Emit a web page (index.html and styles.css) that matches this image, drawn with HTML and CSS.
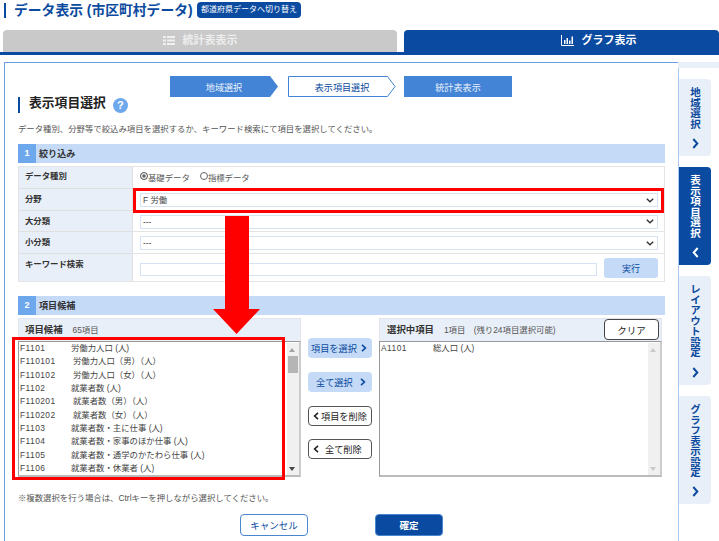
FILE: index.html
```html
<!DOCTYPE html>
<html lang="ja">
<head>
<meta charset="utf-8">
<title>データ表示</title>
<link rel="stylesheet" href="styles.css">
</head>
<body>
<div class="page">
  <header class="head">
    <h1 class="title">データ表示 (市区町村データ)</h1>
    <a class="switch">都道府県データへ切り替え</a>
  </header>
  <nav class="tabs">
    <div class="tab tab-off">
      <svg class="tab-ico" width="12" height="9" viewBox="0 0 12 9"><path fill="#f0f0f0" d="M0 0h3v2H0zM4 0h8v2H4zM0 3.500h3v2H0zM4 3.500h8v2H4zM0 7h3v2H0zM4 7h8v2H4z"/></svg>
      統計表表示
    </div>
    <div class="tab tab-on">
      <svg class="tab-ico" width="13" height="11" viewBox="0 0 13 11"><path fill="none" stroke="#fff" d="M.5 0v10.500H13"/><path fill="#fff" d="M3 5h1.500v4H3zM5.500 3h1.500v6H5.500zM8 5.500h1.500V9H8zM10.500 1.500H12V9h-1.500z"/></svg>
      グラフ表示
    </div>
  </nav>
  <div class="body">
    <main class="panel">
      <div class="steps">
        <div class="step">
          <svg class="step-bg" width="108" height="21" viewBox="0 0 108 21"><path fill="#4384d6" d="M0 0h100l8 10.500-8 10.500H0z"/></svg>
          <span class="step-t step-t-w">地域選択</span>
        </div>
        <div class="step">
          <svg class="step-bg" width="108" height="21" viewBox="0 0 108 21"><path fill="#fff" stroke="#4384d6" d="M.5.500h99l7.500 10-7.500 10H.5z"/></svg>
          <span class="step-t">表示項目選択</span>
        </div>
        <div class="step step-plain"><span class="step-t step-t-w">統計表表示</span></div>
      </div>
      <div class="heading">
        <h2 class="heading-t">表示項目選択</h2>
        <span class="help">?</span>
      </div>
      <p class="desc">データ種別、分野等で絞込み項目を選択するか、キーワード検索にて項目を選択してください。</p>

      <div class="sec"><span class="sec-n">1</span><span class="sec-t">絞り込み</span></div>
      <div class="form">
        <div class="lab r1">データ種別</div>
        <div class="val r1">
          <span class="radio"><i class="dot dot-on"></i>基礎データ</span>
          <span class="radio"><i class="dot"></i>指標データ</span>
        </div>
        <div class="lab r2">分野</div>
        <div class="val r2"><div class="sel"><span>F 労働</span><svg class="chev" width="8" height="5" viewBox="0 0 8 5"><path d="M.8.800 4 3.800 7.200.800" fill="none" stroke="#333" stroke-width="1.400"/></svg></div></div>
        <div class="lab r3">大分類</div>
        <div class="val r3"><div class="sel"><span>---</span><svg class="chev" width="8" height="5" viewBox="0 0 8 5"><path d="M.8.800 4 3.800 7.200.800" fill="none" stroke="#333" stroke-width="1.400"/></svg></div></div>
        <div class="lab r4">小分類</div>
        <div class="val r4"><div class="sel"><span>---</span><svg class="chev" width="8" height="5" viewBox="0 0 8 5"><path d="M.8.800 4 3.800 7.200.800" fill="none" stroke="#333" stroke-width="1.400"/></svg></div></div>
        <div class="lab r5">キーワード検索</div>
        <div class="val r5"><div class="kw"></div><button class="run">実行</button></div>
      </div>

      <div class="sec sec-2"><span class="sec-n">2</span><span class="sec-t">項目候補</span></div>
      <div class="pick">
        <section class="box">
          <div class="box-h"><b class="box-t">項目候補</b><span class="box-c">65項目</span></div>
          <div class="list">
            <ul class="items">
              <li><span class="code">F1101</span>労働力人口 (人)</li>
              <li><span class="code code-l">F110101</span>労働力人口（男）（人）</li>
              <li><span class="code code-l">F110102</span>労働力人口（女）（人）</li>
              <li><span class="code">F1102</span>就業者数 (人)</li>
              <li><span class="code code-l">F110201</span>就業者数（男）（人）</li>
              <li><span class="code code-l">F110202</span>就業者数（女）（人）</li>
              <li><span class="code">F1103</span>就業者数・主に仕事 (人)</li>
              <li><span class="code">F1104</span>就業者数・家事のほか仕事 (人)</li>
              <li><span class="code">F1105</span>就業者数・通学のかたわら仕事 (人)</li>
              <li><span class="code">F1106</span>就業者数・休業者 (人)</li>
            </ul>
            <div class="sb"><i class="up"></i><i class="thumb"></i><i class="down"></i></div>
          </div>
        </section>
        <div class="acts">
          <button class="act act-b">項目を選択<svg class="ac" width="6" height="8" viewBox="0 0 6 8"><path d="M1 .8 4.400 4 1 7.200" fill="none" stroke="#0b4a9e" stroke-width="1.600"/></svg></button>
          <button class="act act-b act-c">全て選択<svg class="ac" width="6" height="8" viewBox="0 0 6 8"><path d="M1 .8 4.400 4 1 7.200" fill="none" stroke="#0b4a9e" stroke-width="1.600"/></svg></button>
          <button class="act act-o"><svg class="ac2" width="6" height="8" viewBox="0 0 6 8"><path d="M5 .8 1.600 4 5 7.200" fill="none" stroke="#222" stroke-width="1.600"/></svg>項目を削除</button>
          <button class="act act-o act-d"><svg class="ac3" width="6" height="8" viewBox="0 0 6 8"><path d="M5 .8 1.600 4 5 7.200" fill="none" stroke="#222" stroke-width="1.600"/></svg>全て削除</button>
        </div>
        <section class="box box-r">
          <div class="box-h"><b class="box-t">選択中項目</b><span class="box-c">1項目　(残り24項目選択可能)</span><button class="clear">クリア</button></div>
          <div class="list">
            <ul class="items">
              <li><span class="code code-a">A1101</span>総人口 (人)</li>
            </ul>
            <div class="sb"><i class="up up-l"></i><i class="down down-l"></i></div>
          </div>
        </section>
      </div>
      <p class="note">※複数選択を行う場合は、Ctrlキーを押しながら選択してください。</p>
      <div class="foot">
        <button class="btn btn-c">キャンセル</button>
        <button class="btn btn-p">確定</button>
      </div>
    </main>
    <aside class="side">
      <a class="nav"><span class="nav-t">地域選択</span><svg width="7" height="11" viewBox="0 0 7 11"><path d="M1.300 1 5.300 5.500 1.300 10" fill="none" stroke="#0b4a9e" stroke-width="2"/></svg></a>
      <a class="nav nav-on"><span class="nav-t">表示項目選択</span><svg width="7" height="11" viewBox="0 0 7 11"><path d="M5.700 1 1.700 5.500 5.700 10" fill="none" stroke="#fff" stroke-width="2"/></svg></a>
      <a class="nav"><span class="nav-t">レイアウト設定</span><svg width="7" height="11" viewBox="0 0 7 11"><path d="M1.300 1 5.300 5.500 1.300 10" fill="none" stroke="#0b4a9e" stroke-width="2"/></svg></a>
      <a class="nav"><span class="nav-t">グラフ表示設定</span><svg width="7" height="11" viewBox="0 0 7 11"><path d="M1.300 1 5.300 5.500 1.300 10" fill="none" stroke="#0b4a9e" stroke-width="2"/></svg></a>
    </aside>
  </div>
  <div class="mark mark-1"></div>
  <div class="mark mark-2"></div>
  <svg class="arrow" width="47" height="118" viewBox="0 0 47 118"><path fill="#f00" d="M12 0h24v93h11L23.500 118 0 93h12z"/></svg>
</div>
</body>
</html>
```
FILE: styles.css
```css
* { box-sizing: border-box; }
html, body { margin: 0; padding: 0; background: #fff; }
body {
  font-family: "Liberation Sans", "Noto Sans CJK JP", sans-serif;
  font-size: 8.4px;
  color: #444;
}
.page { position: relative; width: 719px; height: 541px; overflow: hidden; }
button { font-family: inherit; padding: 0; cursor: pointer; }
ul { list-style: none; margin: 0; padding: 0; }

.head { height: 30px; padding: 2px 0 0 4px; display: flex; align-items: flex-start; }
.title {
  margin: 1px 4px 0 0; width: 189px; height: 15px; padding-left: 8px;
  border-left: 2px solid #0a4ba1;
  font-size: 13.8px; line-height: 15px; font-weight: 700; color: #0b4a9e; white-space: nowrap;
}
.switch {
  height: 16px; width: 104px; background: #0a4ba1; color: #fff; border-radius: 4px;
  font-size: 8px; line-height: 15px; text-align: center; white-space: nowrap;
}

.tabs { height: 25px; display: flex; padding-left: 3px; gap: 7px; border-bottom: 3px solid #0a4ba1; }
.tab {
  height: 22px; border-radius: 4px 4px 0 0; font-size: 11px; font-weight: 700;
  line-height: 20px; display: flex; justify-content: center; align-items: center; gap: 8px;
  padding-bottom: 2px;
}
.tab-off { width: 394px; background: #c9c9c9; color: #eee; }
.tab-on { width: 315px; background: #0a4ba1; color: #fff; padding-left: 74px; }
.tab-ico { flex: none; }

.body { display: flex; margin-top: 7px; height: 479px; }
.panel {
  width: 675px; margin-left: 4px; padding: 13px 0 0 13px;
  border: 1px solid #6a9ee0; border-bottom: 0; position: relative;
  border-right-color: #a9c9f2;
}
.steps { height: 21px; display: flex; margin-left: 152px; gap: 10px; }
.step { position: relative; width: 108px; height: 21px; display: flex; align-items: center; justify-content: center; }
.step-plain { background: #4384d6; margin-left: -2px; }
.step-bg { position: absolute; left: 0; top: 0; }
.step-t { position: relative; font-size: 9.1px; color: #0b4a9e; }
.step-t-w { color: #eaf2fc; }

.heading { height: 16px; display: flex; align-items: flex-start; gap: 7px; border-left: 2px solid #0a4ba1; padding-left: 9px; }
.heading-t { margin: 0; font-size: 12.8px; line-height: 12px; font-weight: 700; color: #222; }
.help {
  width: 15px; height: 15px; margin-top: 1px; border-radius: 50%; background: #6ea8ec; color: #fff;
  font-size: 11px; font-weight: 700; line-height: 15px; text-align: center;
}
.desc { margin: 9px 0 0; height: 14px; line-height: 14px; color: #555; white-space: nowrap; }

.sec { width: 647px; height: 19px; margin-top: 8px; background: #c4daf7; display: flex; align-items: center; }
.sec-2 { margin-top: 14px; }
.sec-n { width: 18px; height: 19px; background: #6ea8ec; color: #fff; font-weight: 700; font-size: 9px; line-height: 19px; text-align: center; flex: none; }
.sec-t { margin-left: 3px; padding-bottom: 2px; font-size: 9.1px; font-weight: 700; color: #333; }

.form {
  width: 647px; margin-top: 3px; display: grid; grid-template-columns: 115px 1fr;
  grid-template-rows: 22px 22px 21px 22px 27px;
  border-right: 1px solid #e4e4e4; border-top: 1px solid #e4e4e4; border-bottom: 1px solid #e4e4e4;
}
.lab {
  background: #e9eff8; padding: 3px 0 0 6px; font-weight: 700; color: #333; line-height: 14px;
  border-bottom: 1px solid #e0e0e0; border-right: 1px solid #e0e0e0; border-left: 1px solid #e4e4e4;
}
.lab.r1 { padding-top: 2px; }
.val { border-bottom: 1px solid #e4e4e4; padding: 1px 7px 0; display: flex; align-items: center; }
.r5 { border-bottom: 0; }
.val.r1 { gap: 10px; padding-top: 0; padding-bottom: 1px; }
.radio { display: flex; align-items: center; color: #555; white-space: nowrap; }
.dot { width: 8px; height: 8px; border-radius: 50%; border: 1px solid #666; background: #fff; flex: none; margin-top: -3px; }
.dot-on { background: #666; box-shadow: inset 0 0 0 1.200px #fff; }
.sel {
  flex: 1; height: 14px; border: 1px solid #d6e3f5; background: #fff; display: flex;
  align-items: center; justify-content: space-between; padding: 0 3px 0 2px; color: #444; line-height: 12px;
}
.kw { width: 457px; height: 13px; border: 1px solid #d6e3f5; background: #fff; margin-top: 2px; }
.run {
  width: 54px; height: 20px; margin-left: 7px; border: 0; border-radius: 3px; background: #c4daf7;
  color: #0b4a9e; font-size: 9px;
}

.pick { display: flex; margin-top: 3px; height: 159px; }
.box { width: 283px; flex: none; }
.box-h {
  height: 23px; background: #e9eff8; border: 1px solid #e2e6ec; border-bottom: 0;
  display: flex; align-items: center; padding: 0 0 3px 6px; position: relative;
}
.box-t { font-size: 9.4px; color: #333; }
.box-c { margin-left: 10px; color: #555; white-space: pre; }
.list { height: 136px; border: 1px solid #999; border-bottom: 2px solid #bbb; border-right: 2px solid #ccc; display: flex; background: #fff; }
.items { flex: 1; overflow: hidden; }
.items li { height: 13.350px; line-height: 13.350px; padding-left: 1px; white-space: nowrap; color: #444; }
.code { display: inline-block; width: 51px; letter-spacing: .45px; }
.code-l { width: 53px; }
.code-a { width: 52px; }
.sb { width: 12px; background: #f0f0f0; flex: none; position: relative; margin: 1px 0 0; }
.sb i { position: absolute; left: 2px; }
.up { top: 5px; width: 0; height: 0; border: 3.500px solid transparent; border-top: 0; border-bottom: 4px solid #a3a3a3; }
.down { bottom: 4px; width: 0; height: 0; border: 3.500px solid transparent; border-bottom: 0; border-top: 4px solid #444; }
.up-l { border-bottom-color: #c8c8c8; }
.down-l { border-top-color: #c8c8c8; }
.sb .thumb { top: 13px; width: 10px; height: 17px; background: #b5b5b5; left: 1px; }

.acts { width: 64px; margin: 20px 7px 0; display: flex; flex-direction: column; flex: none; gap: 14px; }
.act {
  height: 20px; width: 64px; border-radius: 4px; font-size: 9.2px; display: flex; align-items: center;
  white-space: nowrap; flex: none; padding-bottom: 1px;
}
.act-b { background: #c4daf7; border: 0; color: #0b4a9e; padding-left: 3px; gap: 4px; }
.act-c { padding-left: 8px; gap: 7px; }
.act-o { background: #fff; border: 1px solid #555; color: #222; padding-left: 4px; gap: 2px; }
.act-d { gap: 6px; margin-top: -1px; }
.ac, .ac2, .ac3 { flex: none; }
.box-r .box-h { padding-left: 7px; }
.clear {
  position: absolute; right: 2px; top: 0; width: 55px; height: 21px; background: #fff;
  border: 1px solid #444; border-radius: 4px; font-size: 9.5px; color: #222;
}
.note { margin: 14px 0 0; height: 14px; line-height: 14px; color: #555; white-space: nowrap; }
.foot { width: 647px; margin-top: 9px; display: flex; justify-content: center; gap: 67px; }
.btn { width: 68px; height: 22px; border-radius: 4px; font-size: 9.5px; padding-bottom: 1px; }
.btn-c { background: #fff; border: 1px solid #4a86d0; color: #0b4a9e; }
.btn-p { background: #0a4ba1; border: 1px solid #4a86d0; color: #fff; font-weight: 700; }

.side { flex: none; width: 40px; position: relative; padding-top: 17px; display: flex; flex-direction: column; gap: 11px; }
.side::before { content: ""; position: absolute; left: -1px; top: 0; width: 41px; height: 6px; background: #e9eff8; }
.nav {
  width: 32px; background: #e9eff8; border-radius: 0 4px 4px 0; padding: 8px 0 7px;
  display: flex; flex-direction: column; align-items: center; gap: 9px; color: #0b4a9e;
}
.nav-on { background: #0a4ba1; color: #fff; }
.nav-t { writing-mode: vertical-rl; font-size: 10.5px; line-height: 12px; font-weight: 700; white-space: nowrap; }

.mark { position: absolute; border: 3px solid #f00; pointer-events: none; }
.mark-1 { left: 133px; top: 188px; width: 531px; height: 25px; }
.mark-2 { left: 12px; top: 337px; width: 273px; height: 143px; }
.arrow { position: absolute; left: 213px; top: 216px; }
```
